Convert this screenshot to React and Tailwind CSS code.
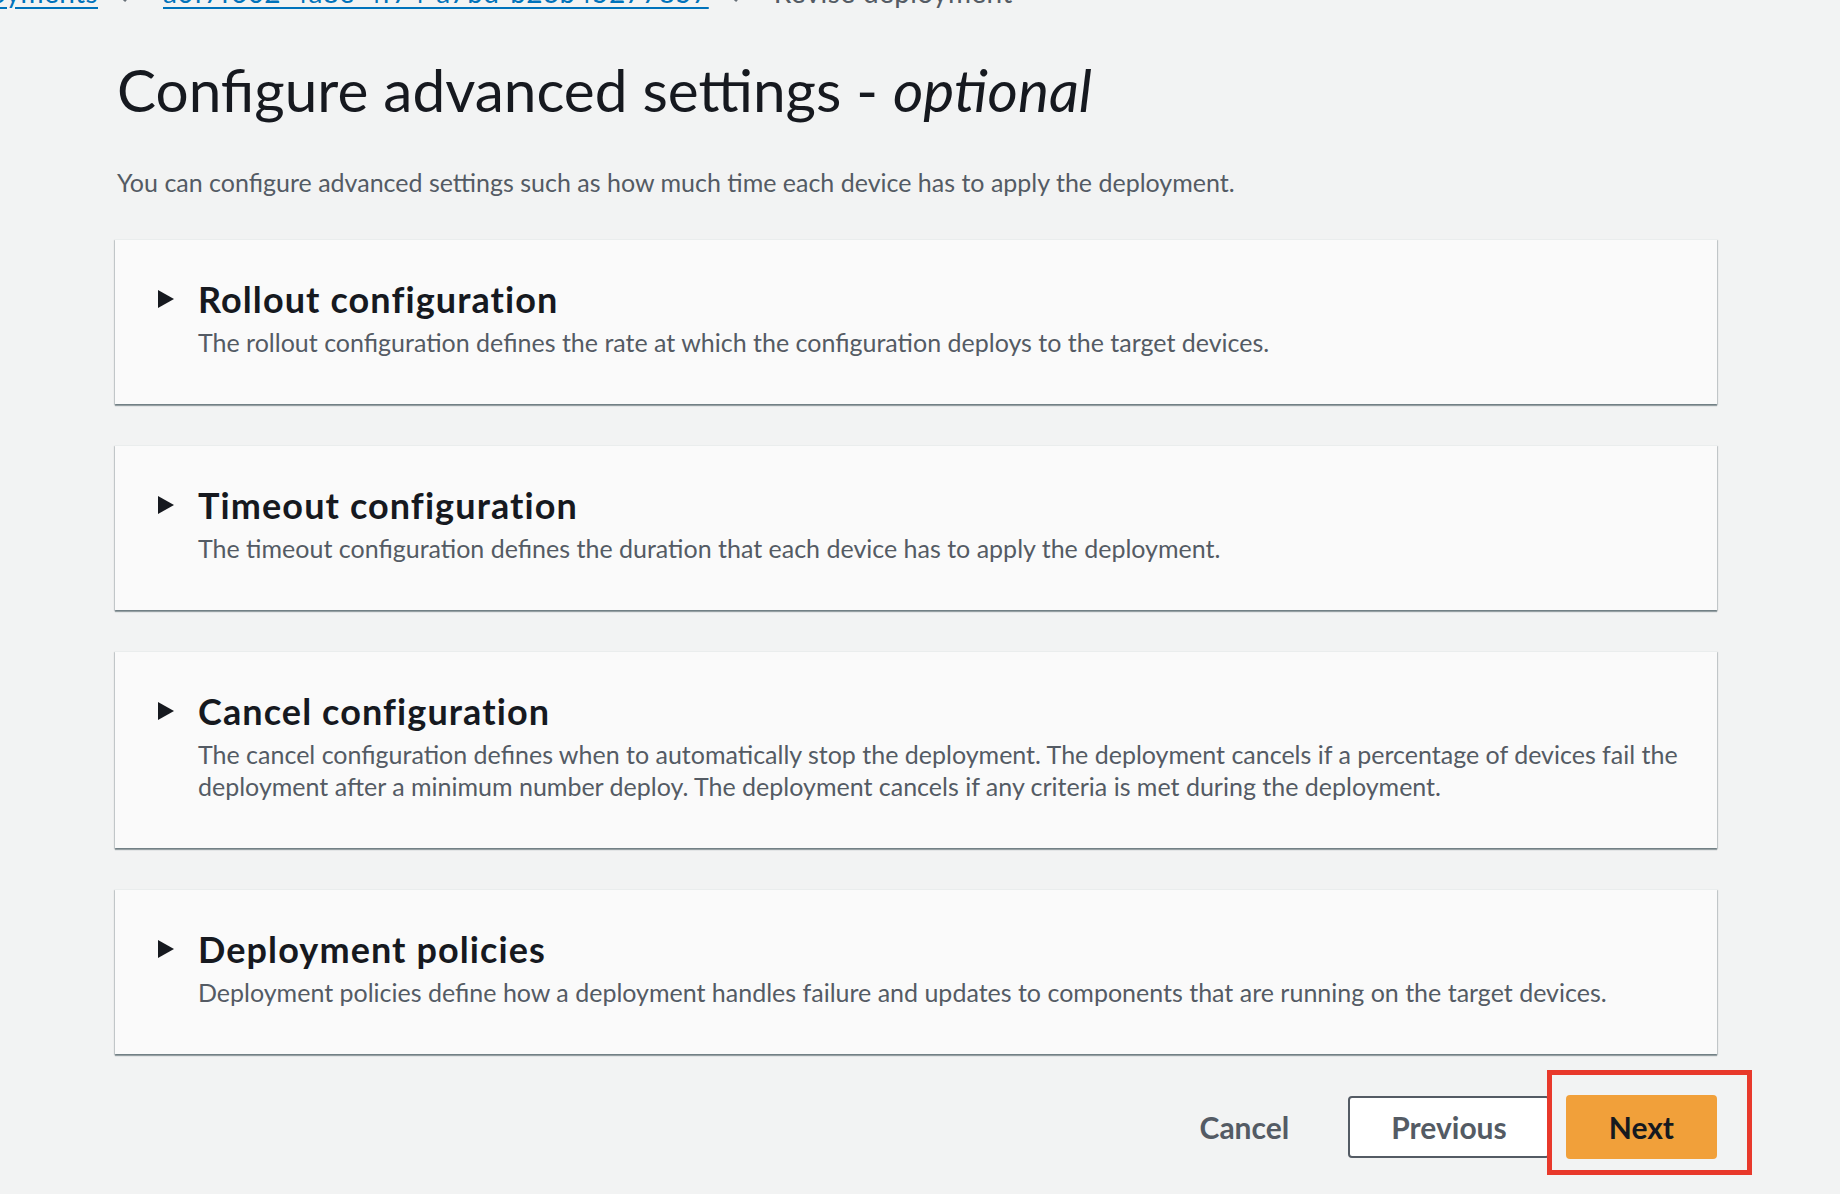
import React from "react";

const cards = [
  {
    title: "Rollout configuration",
    desc: "The rollout configuration defines the rate at which the configuration deploys to the target devices.",
  },
  {
    title: "Timeout configuration",
    desc: "The timeout configuration defines the duration that each device has to apply the deployment.",
  },
  {
    title: "Cancel configuration",
    desc: "The cancel configuration defines when to automatically stop the deployment. The deployment cancels if a percentage of devices fail the deployment after a minimum number deploy. The deployment cancels if any criteria is met during the deployment.",
  },
  {
    title: "Deployment policies",
    desc: "Deployment policies define how a deployment handles failure and updates to components that are running on the target devices.",
  },
];

function Caret() {
  return (
    <svg width="16" height="18" viewBox="0 0 16 18" className="shrink-0">
      <path d="M0 0 L16 9 L0 18 Z" fill="#16191f" />
    </svg>
  );
}

function Chevron() {
  return (
    <svg width="14" height="22" viewBox="0 0 14 22" className="ml-[23px] mr-[28px] shrink-0">
      <path d="M3 2 L11 11 L3 20" stroke="#687078" strokeWidth="3" fill="none" />
    </svg>
  );
}

export default function App() {
  return (
    <div className="min-h-[1194px] w-full overflow-hidden bg-[#f2f3f3] font-['Lato',sans-serif] text-[#16191f]">
      {/* breadcrumb */}
      <div className="-mt-[25px] flex h-[34px] items-center whitespace-nowrap text-[28px] leading-[34px] tracking-[0.4px]">
        <div className="flex w-[98px] shrink-0 justify-end">
          <span className="text-[#0073bb] underline underline-offset-[4px]">Deployments</span>
        </div>
        <Chevron />
        <span className="text-[#0073bb] underline underline-offset-[4px]">a0f7f602-4a8e-4f74-a7bd-b23b45277857</span>
        <Chevron />
        <span className="text-[#545b64]">Revise deployment</span>
      </div>
      <div className="pl-[115px] pr-[123px]">
        <h1 className="mt-[46px] pl-[2px] text-[58.5px] font-normal leading-[68px] text-[#16191f]">
          Configure advanced settings - <em className="italic">optional</em>
        </h1>
        <p className="mt-[43px] pl-[2px] text-[25px] leading-[32px] text-[#545b64]">
          You can configure advanced settings such as how much time each device has to apply the deployment.
        </p>
        <div className="mt-[41px] flex flex-col gap-[41px]">
          {cards.map((c) => (
            <div
              key={c.title}
              className="border-t border-[#eaeded] bg-[#fafafa] pb-[46px] pl-[43px] pr-[28px] pt-[39px] shadow-[0_2px_1px_0_rgba(0,28,36,0.35),1px_1px_1px_0_rgba(0,28,36,0.15),-1px_1px_1px_0_rgba(0,28,36,0.15)]"
            >
              <div className="flex items-center gap-[24px]">
                <Caret />
                <h2 className="text-[36px] font-bold leading-[40px] tracking-[1.1px] text-[#16191f]">{c.title}</h2>
              </div>
              <p className="mt-[7px] pl-[40px] text-[25px] leading-[32px] text-[#545b64]">{c.desc}</p>
            </div>
          ))}
        </div>
        <div className="mt-[41px] flex items-center justify-end gap-[16px]">
          <button className="h-[62px] rounded-[4px] px-[43px] text-[30px] font-bold text-[#545b64]">Cancel</button>
          <button className="h-[62px] rounded-[4px] border-2 border-[#545b64] bg-white px-[41px] text-[30px] font-bold text-[#545b64]">
            Previous
          </button>
          <div className="relative">
            <button className="h-[64px] rounded-[4px] bg-[#f1a03a] px-[43px] text-[30px] font-bold text-[#16191f]">Next</button>
            <div className="pointer-events-none absolute -bottom-[16px] -left-[19px] -right-[35px] -top-[25px] border-[5px] border-[#e8392b]" />
          </div>
        </div>
      </div>
    </div>
  );
}
